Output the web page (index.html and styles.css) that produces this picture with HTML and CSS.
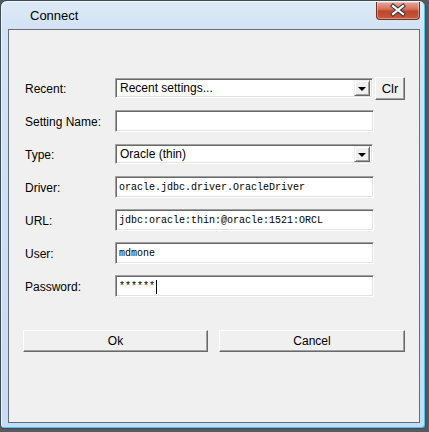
FILE: index.html
```html
<!DOCTYPE html>
<html lang="en">
<head>
  <meta charset="UTF-8">
  <title>Connect</title>
  <link rel="stylesheet" href="styles.css">
</head>
<body>

<div class="window">
  <div class="titlebar">
    <span class="title">Connect</span>
    <div class="close">
      <svg width="44" height="17" viewBox="0 0 44 17">
        <path d="M17 4 L27 12 M27 4 L17 12" stroke="#3b3b3b" stroke-width="4.2" stroke-linecap="square"/>
        <path d="M17 4 L27 12 M27 4 L17 12" stroke="#ffffff" stroke-width="2.2" stroke-linecap="square"/>
      </svg>
    </div>
  </div>

  <div class="panel">
    <div class="form">
      <label>Recent:</label>
      <div class="combo"><span>Recent settings...</span><span class="arrow"></span></div>
      <button class="btn clr">Clr</button>

      <label>Setting Name:</label>
      <div class="textfield"></div>
      <span></span>

      <label>Type:</label>
      <div class="combo"><span>Oracle (thin)</span><span class="arrow"></span></div>
      <span></span>

      <label>Driver:</label>
      <div class="textfield mono">oracle.jdbc.driver.OracleDriver</div>
      <span></span>

      <label>URL:</label>
      <div class="textfield mono">jdbc:oracle:thin:@oracle:1521:ORCL</div>
      <span></span>

      <label>User:</label>
      <div class="textfield mono">mdmone</div>
      <span></span>

      <label>Password:</label>
      <div class="textfield mono"><span class="caret">******</span></div>
      <span></span>
    </div>

    <div class="actions">
      <button class="btn">Ok</button>
      <button class="btn">Cancel</button>
    </div>
  </div>
</div>

</body>
</html>
```

FILE: styles.css
```css
body {
  margin: 0;
  background: #555a60;
  font-family: "Liberation Sans", Arial, sans-serif;
  width: 429px;
  height: 432px;
  overflow: hidden;
}
.window {
  width: 424px;
  height: 427px;
  border: 1px solid #404a55;
  border-radius: 7px 7px 4px 4px;
  background: linear-gradient(180deg, #dde9f6 0, #d3e3f4 28px, #c6dcf2 100%);
  box-shadow: inset -1px -1px 0 #4cc6f0, inset 1px 1px 0 rgba(255,255,255,0.6);
  display: flex;
  flex-direction: column;
}
.titlebar {
  height: 28px;
  display: flex;
  justify-content: space-between;
  padding-left: 29px;
  flex-shrink: 0;
}
.title {
  font-size: 13px;
  color: #000;
  align-self: center;
  margin-top: 1px;
}
.close {
  width: 42px;
  height: 17px;
  margin-top: 1px;
  margin-right: 5px;
  border: 1px solid #6e3328;
  border-top: none;
  border-radius: 0 0 4px 4px;
  background: linear-gradient(180deg, #e6a899 0, #d8735f 40%, #c4432b 55%, #c85a3f 100%);
  box-shadow: inset 0 0 0 1px rgba(255,255,255,0.35);
}
.close svg {
  display: block;
  margin-left: -1px;
}
.panel {
  margin-left: 7px;
  width: 410px;
  height: 392px;
  border: 1px solid #646e79;
  background: #f0f0f0;
  box-sizing: content-box;
  padding: 0;
}
.form {
  display: grid;
  grid-template-columns: 92px 259px 40px;
  grid-auto-rows: 22px;
  row-gap: 11px;
  align-items: center;
  padding: 47px 0 0 14px;
}
.form label {
  font-size: 12px;
  color: #000;
  padding-left: 2px;
  margin-top: 1px;
}
.textfield,
.combo {
  box-sizing: border-box;
  height: 22px;
  background: #fff;
  border: 1px solid;
  border-color: #a0a0a0 #ffffff #ffffff #a0a0a0;
  box-shadow: inset 1px 1px 0 #696969, inset -1px -1px 0 #e3e3e3;
  display: flex;
  align-items: center;
  padding-left: 3px;
  font-size: 12px;
}
.combo {
  width: 258px;
  height: 20px;
  justify-content: space-between;
  padding-right: 2px;
  padding-left: 4px;
}
.arrow {
  box-sizing: border-box;
  width: 16px;
  height: 16px;
  background: #f0f0f0;
  border: 1px solid;
  border-color: #f0f0f0 #696969 #696969 #f0f0f0;
  box-shadow: inset 1px 1px 0 #fff, inset -1px -1px 0 #a0a0a0;
  display: flex;
  align-items: center;
  justify-content: center;
}
.arrow::after {
  content: "";
  border-left: 4px solid transparent;
  border-right: 4px solid transparent;
  border-top: 4px solid #000;
  margin-top: 1px;
}
.mono {
  font-family: "Liberation Mono", "Courier New", monospace;
  font-size: 10px;
  padding-left: 3px;
  padding-top: 1px;
}
.caret {
  border-right: 1px solid #000;
  padding-right: 1px;
  line-height: 14px;
}
.btn {
  font-family: "Liberation Sans", Arial, sans-serif;
  font-size: 12px;
  color: #000;
  background: #f0f0f0;
  border: 1px solid;
  border-color: #ffffff #696969 #696969 #ffffff;
  box-shadow: inset -1px -1px 0 #a0a0a0;
  padding: 0;
  height: 22px;
}
.clr {
  width: 30px;
  height: 23px;
  margin-left: 1px;
  font-size: 13px;
}
.actions {
  display: grid;
  grid-template-columns: 185px 186px;
  column-gap: 11px;
  margin-top: 33px;
  padding-left: 14px;
}
```
